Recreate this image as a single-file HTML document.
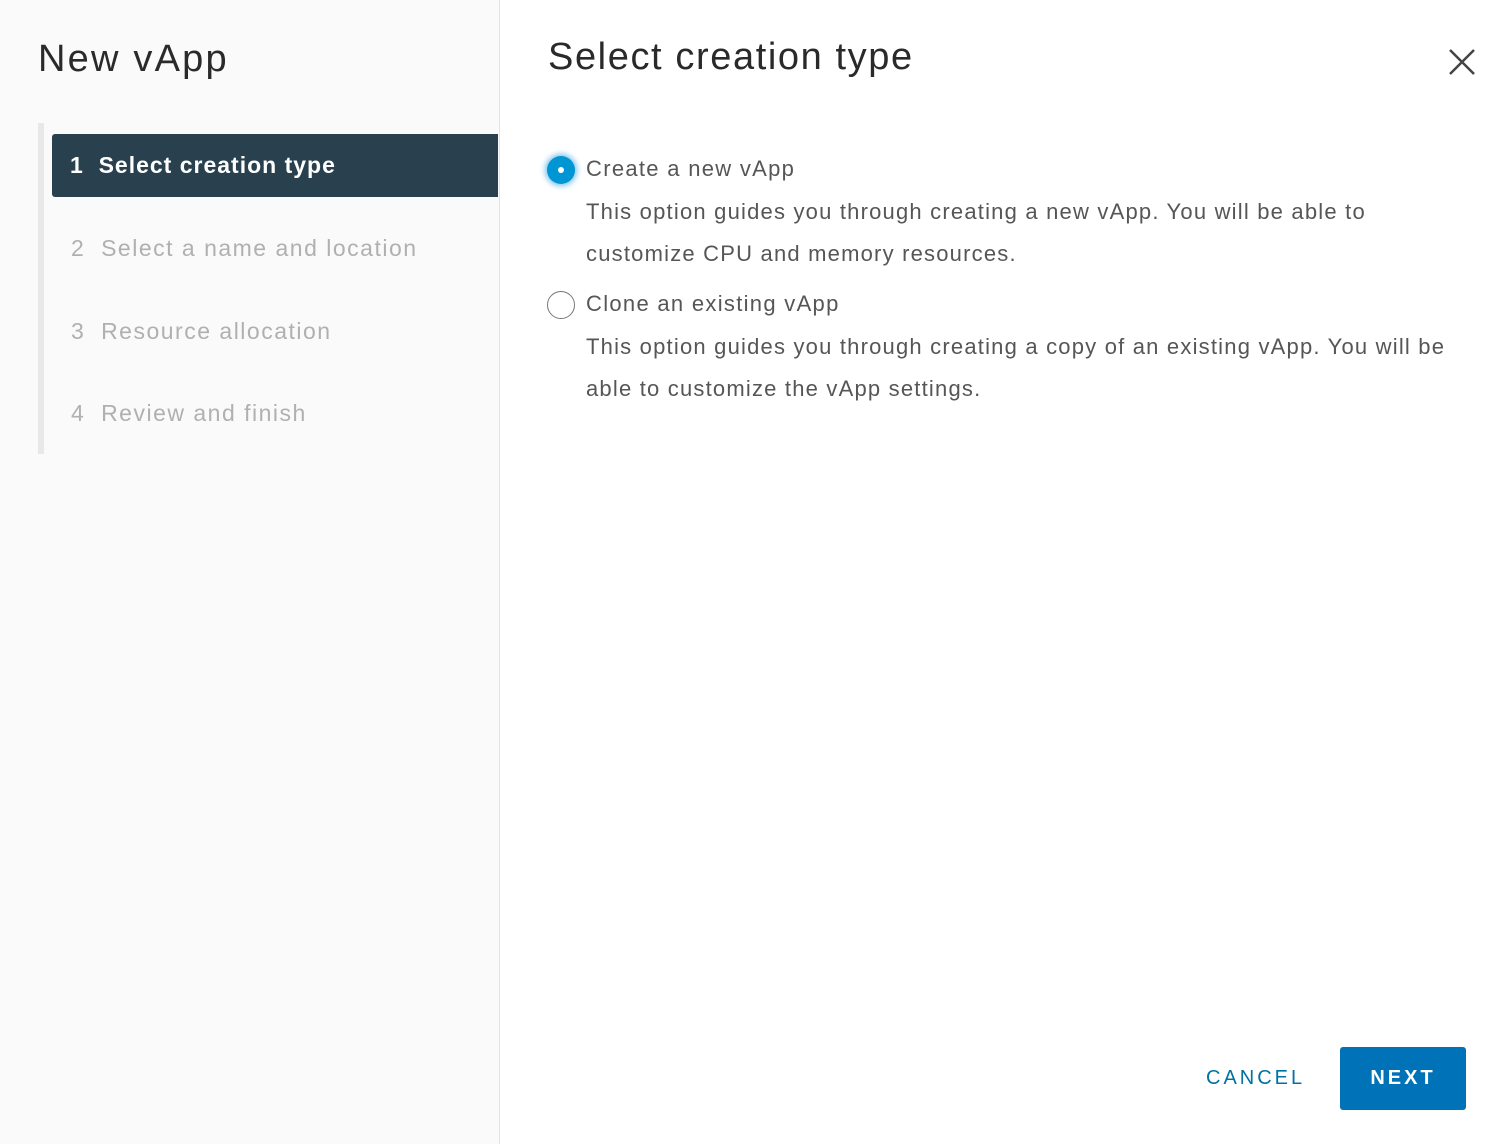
<!DOCTYPE html>
<html><head><style>
*{margin:0;padding:0;box-sizing:border-box}
body{width:1500px;height:1144px;background:#fff;font-family:"Liberation Sans",sans-serif;position:relative;overflow:hidden;color:#565656}
.side{position:absolute;left:0;top:0;width:500px;height:1144px;background:#fafafa;border-right:1px solid #e4e4e4}
.t{position:absolute;white-space:nowrap}
.bar{position:absolute;left:38px;top:123px;width:6px;height:331px;background:#e8e8e8}
.act{position:absolute;left:52px;top:134px;width:446px;height:63px;background:#29414e;border-radius:3px 0 0 3px}
.step{font-size:23px;color:#b0b0b0;letter-spacing:1.5px}
.radio{position:absolute;width:28px;height:28px;border-radius:50%}
.d{font-size:22px;line-height:42px;letter-spacing:1.2px}
</style></head><body>
<div class="side"></div>
<div class="t" style="left:38px;top:38px;font-size:38px;color:#2a2a2a;letter-spacing:2.2px">New vApp</div>
<div class="bar"></div>
<div class="act"></div>
<div class="t" style="left:70px;top:152px;font-size:23px;color:#fff;font-weight:bold;letter-spacing:1px">1&nbsp;&nbsp;Select creation type</div>
<div class="t step" style="left:71px;top:235px">2&nbsp;&nbsp;Select a name and location</div>
<div class="t step" style="left:71px;top:318px">3&nbsp;&nbsp;Resource allocation</div>
<div class="t step" style="left:71px;top:400px">4&nbsp;&nbsp;Review and finish</div>
<div class="t" style="left:548px;top:36px;font-size:38px;color:#2a2a2a;letter-spacing:1.6px">Select creation type</div>
<svg class="t" style="left:1448px;top:48px" width="28" height="28"><path d="M2 2L26 26M26 2L2 26" stroke="#444" stroke-width="2.5"/></svg>
<div class="radio" style="left:547px;top:156px;background:#0095d3;box-shadow:0 0 6px 2px #7cc3ea"></div>
<div class="radio" style="left:558px;top:167px;width:6px;height:6px;background:#fff"></div>
<div class="t" style="left:586px;top:156px;font-size:22px;letter-spacing:1.3px">Create a new vApp</div>
<div class="t d" style="left:586px;top:191px">This option guides you through creating a new vApp. You will be able to<br>customize CPU and memory resources.</div>
<div class="radio" style="left:547px;top:291px;border:1.5px solid #777"></div>
<div class="t" style="left:586px;top:291px;font-size:22px;letter-spacing:1.3px">Clone an existing vApp</div>
<div class="t d" style="left:586px;top:326px">This option guides you through creating a copy of an existing vApp. You will be<br>able to customize the vApp settings.</div>
<div class="t" style="left:1206px;top:1067px;font-size:20px;color:#0072a3;letter-spacing:3px">CANCEL</div>
<div class="t" style="left:1340px;top:1047px;width:126px;height:63px;background:#0072b8;border-radius:3px;color:#fff;font-size:20px;font-weight:bold;letter-spacing:3px;text-align:center;line-height:63px">NEXT</div>
</body></html>
